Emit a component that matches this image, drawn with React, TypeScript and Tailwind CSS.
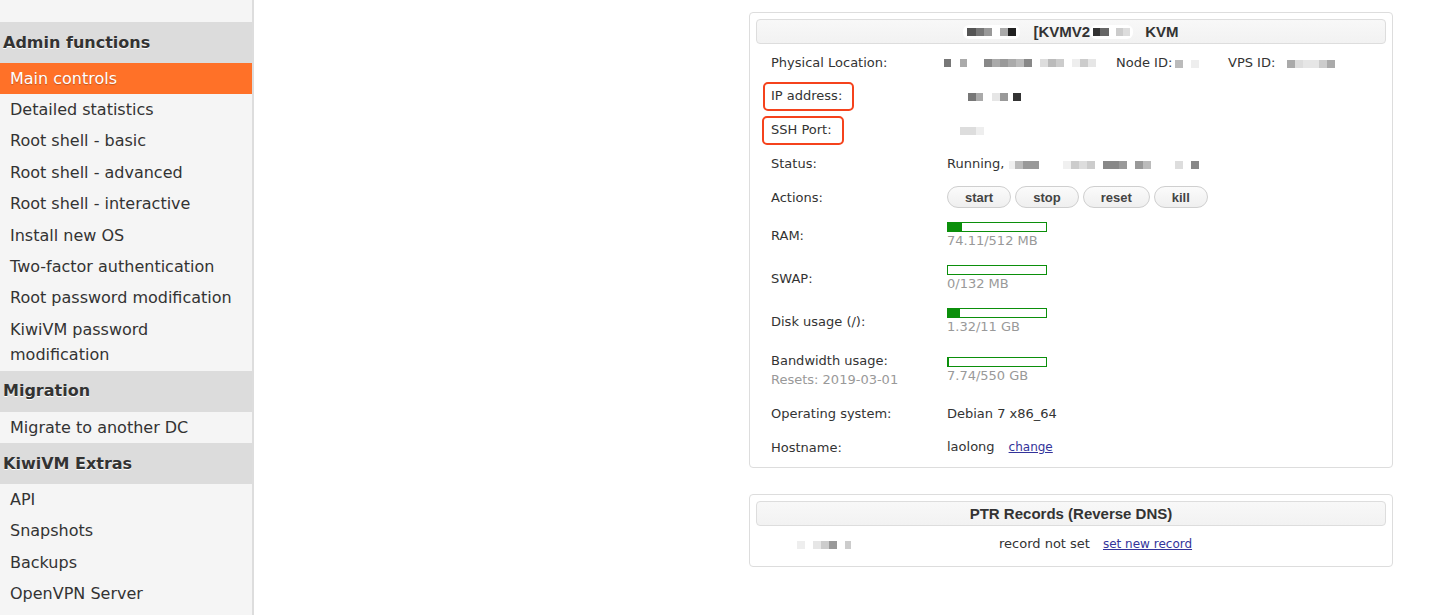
import React from "react";

const verdana = { fontFamily: '"DejaVu Sans", Verdana, sans-serif' };
const helv = { fontFamily: '"Liberation Sans", Arial, sans-serif' };

// pixelated (redacted) blocks: [width, colour]
function Blur({ cells, h = 8 }: { cells: [number, string][]; h?: number }) {
  return (
    <span className="inline-flex items-center align-middle">
      {cells.map(([w, c], i) => (
        <span key={i} style={{ width: w, height: h, background: c }} />
      ))}
    </span>
  );
}

function Bar({ pct }: { pct: number }) {
  return (
    <div className="w-[100px] h-[10px] border border-[#0b8f0b] bg-white">
      <div className="h-full bg-[#0b8f0b]" style={{ width: `${pct}%` }} />
    </div>
  );
}

function Row({
  label,
  children,
  py = "py-2",
}: {
  label: React.ReactNode;
  children: React.ReactNode;
  py?: string;
}) {
  return (
    <div className={`grid grid-cols-[191px_1fr] items-center ${py}`}>
      <div className="pl-[15px]">{label}</div>
      <div>{children}</div>
    </div>
  );
}

const menu: { type: "head" | "item" | "active"; text: string }[] = [
  { type: "head", text: "Admin functions" },
  { type: "active", text: "Main controls" },
  { type: "item", text: "Detailed statistics" },
  { type: "item", text: "Root shell - basic" },
  { type: "item", text: "Root shell - advanced" },
  { type: "item", text: "Root shell - interactive" },
  { type: "item", text: "Install new OS" },
  { type: "item", text: "Two-factor authentication" },
  { type: "item", text: "Root password modification" },
  { type: "item", text: "KiwiVM password modification" },
  { type: "head", text: "Migration" },
  { type: "item", text: "Migrate to another DC" },
  { type: "head", text: "KiwiVM Extras" },
  { type: "item", text: "API" },
  { type: "item", text: "Snapshots" },
  { type: "item", text: "Backups" },
  { type: "item", text: "OpenVPN Server" },
];

function Sidebar() {
  return (
    <aside
      className="w-[254px] shrink-0 bg-[#f5f5f5] border-r-2 border-[#dddddd] pt-[22px] text-[16px] text-[#333]"
      style={verdana}
    >
      {menu.map((m, i) =>
        m.type === "head" ? (
          <div
            key={i}
            className="h-[41px] flex items-center pl-[3px] bg-[#dcdcdc] font-bold [text-shadow:0_1px_0_#fff]"
          >
            {m.text}
          </div>
        ) : m.type === "active" ? (
          <div
            key={i}
            className="h-[31px] flex items-center pl-[10px] bg-[#ff7128] text-white [text-shadow:0_1px_1px_rgba(0,0,0,0.25)]"
          >
            {m.text}
          </div>
        ) : (
          <div key={i} className="pl-[10px] pr-2 py-[3px] leading-[25.4px]">
            {m.text}
          </div>
        )
      )}
    </aside>
  );
}

function TitleBar({ children }: { children: React.ReactNode }) {
  return (
    <div
      className="h-[25px] flex items-center justify-center rounded-[4px] border border-[#dddddd] bg-gradient-to-b from-[#f8f8f8] to-[#f2f2f2] text-[15px] font-bold text-[#333]"
      style={helv}
    >
      {children}
    </div>
  );
}

const btn =
  "h-[22px] px-[17px] rounded-full border border-[#cfcfcf] bg-gradient-to-b from-[#fbfbfb] to-[#efefef] text-[13px] font-bold text-[#444] leading-none";

export default function App() {
  return (
    <div className="flex min-h-[615px] bg-white">
      <Sidebar />
      <main className="flex-1 pl-[495px] pt-[12px]">
        {/* Main VPS panel */}
        <div
          className="w-[644px] rounded-[4px] border border-[#dddddd] px-[6px] pt-[6px] pb-[3px] text-[13px] leading-[17px] text-[#333]"
          style={verdana}
        >
          <TitleBar>
            <span className="inline-flex items-center rounded-[6px] bg-white px-[4px] py-[3px]">
              <Blur cells={[[9, "#555"], [8, "#777"], [8, "#999"], [8, "transparent"], [8, "#aaa"], [8, "#222"]]} />
            </span>
            <span className="ml-[13px]">[KVMV2</span>
            <span className="inline-flex items-center rounded-[6px] bg-white px-[3px] py-[3px]">
              <Blur cells={[[7, "#333"], [9, "#666"], [7, "transparent"], [7, "#ccc"], [7, "#ddd"]]} />
            </span>
            <span className="ml-[12px]">KVM</span>
          </TitleBar>

          <div className="mt-[2px]">
            <Row label="Physical Location:">
              <div className="flex items-center -ml-[3px]">
                <Blur cells={[[7, "#777"], [9, "transparent"], [7, "#aaa"], [17, "transparent"], [8, "#888"], [8, "#aaa"], [8, "#999"], [8, "#aaa"], [8, "#bbb"], [8, "#888"], [8, "transparent"], [8, "#ddd"], [8, "#bbb"], [8, "#ccc"], [8, "transparent"], [8, "#eee"], [8, "#ccc"], [8, "#e6e6e6"]]} />
                <span className="ml-[20px] w-[112px] flex items-center">
                  Node ID:
                  <span className="ml-[3px]">
                    <Blur cells={[[8, "#bbb"], [8, "transparent"], [8, "#eee"]]} />
                  </span>
                </span>
                <span className="flex items-center">
                  VPS ID:
                  <span className="ml-[12px]">
                    <Blur cells={[[8, "#aaa"], [8, "#ddd"], [8, "#e6e6e6"], [8, "#e6e6e6"], [8, "#ccc"], [8, "#aaa"]]} />
                  </span>
                </span>
              </div>
            </Row>
            <Row
              label={
                <span className="-ml-[8px] inline-block rounded-[5px] border-2 border-[#f5421c] pl-[6px] pr-[10px] pt-[3px] pb-[5px] -my-[6px]">
                  IP address:
                </span>
              }
            >
              <span className="ml-[21px]">
                <Blur cells={[[8, "#777"], [7, "#aaa"], [9, "transparent"], [8, "#e6e6e6"], [8, "#999"], [5, "transparent"], [8, "#333"]]} />
              </span>
            </Row>
            <Row
              label={
                <span className="-ml-[9px] inline-block rounded-[5px] border-2 border-[#f5421c] pl-[7px] pr-[10px] pt-[3px] pb-[5px] -my-[6px]">
                  SSH Port:
                </span>
              }
            >
              <span className="ml-[13px]">
                <Blur cells={[[8, "#ddd"], [8, "#ddd"], [8, "#eee"]]} />
              </span>
            </Row>
            <Row label="Status:">
              <div className="flex items-center">
                Running,
                <span className="ml-[5px]">
                  <Blur cells={[[6, "#f0f0f0"], [8, "#bbb"], [8, "#999"], [8, "#999"], [24, "transparent"], [8, "#f0f0f0"], [8, "#ccc"], [8, "#ddd"], [8, "#ccc"], [8, "transparent"], [8, "#888"], [8, "#888"], [8, "#999"], [8, "transparent"], [8, "#999"], [8, "#bbb"], [24, "transparent"], [8, "#ddd"], [8, "transparent"], [8, "#888"]]} />
                </span>
              </div>
            </Row>
            <Row label="Actions:" py="py-[6px]">
              <div className="flex gap-[4px]" style={helv}>
                <button className={btn}>start</button>
                <button className={btn}>stop</button>
                <button className={btn}>reset</button>
                <button className={btn}>kill</button>
              </div>
            </Row>
            <Row label="RAM:">
              <Bar pct={14.5} />
              <div className="text-[#999]">74.11/512 MB</div>
            </Row>
            <Row label="SWAP:">
              <Bar pct={0} />
              <div className="text-[#999]">0/132 MB</div>
            </Row>
            <Row label="Disk usage (/):">
              <Bar pct={12} />
              <div className="text-[#999]">1.32/11 GB</div>
            </Row>
            <Row
              label={
                <div className="leading-[19px]">
                  <div>Bandwidth usage:</div>
                  <div className="text-[#999]">Resets: 2019-03-01</div>
                </div>
              }
            >
              <Bar pct={1.4} />
              <div className="text-[#999]">7.74/550 GB</div>
            </Row>
            <Row label="Operating system:">Debian 7 x86_64</Row>
            <Row label="Hostname:">
              <span>laolong</span>
              <a href="#" className="ml-[14px] text-[12px] text-[#33339a] underline">
                change
              </a>
            </Row>
          </div>
        </div>

        {/* PTR panel */}
        <div
          className="mt-[26px] w-[644px] rounded-[4px] border border-[#dddddd] p-[6px] text-[13px] leading-[17px] text-[#333]"
          style={verdana}
        >
          <TitleBar>PTR Records (Reverse DNS)</TitleBar>
          <div className="grid grid-cols-[243px_1fr] items-center pt-[9px] pb-[7px]">
            <div className="pl-[41px]">
              <Blur cells={[[8, "#eee"], [8, "transparent"], [8, "#e6e6e6"], [8, "#ccc"], [8, "#999"], [8, "transparent"], [6, "#ccc"]]} />
            </div>
            <div>
              <span>record not set</span>
              <a href="#" className="ml-[13px] text-[12px] text-[#33339a] underline">
                set new record
              </a>
            </div>
          </div>
        </div>
      </main>
    </div>
  );
}
